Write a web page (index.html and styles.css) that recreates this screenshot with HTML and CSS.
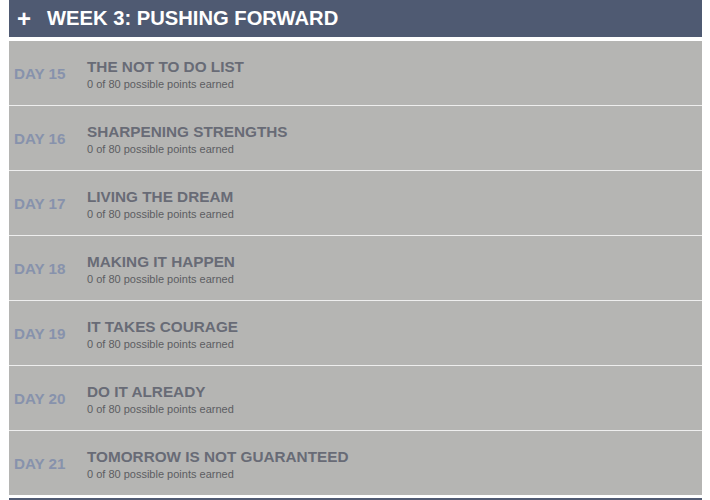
FILE: index.html
```html
<!DOCTYPE html>
<html>
<head>
<meta charset="utf-8">
<link rel="stylesheet" href="styles.css">
</head>
<body>
<div class="week">
  <div class="week-head"><span class="plus">+</span><span class="week-title">WEEK 3: PUSHING FORWARD</span></div>
  <ul class="days">
    <li class="day"><span class="day-num">DAY 15</span><div class="day-info"><div class="day-title">THE NOT TO DO LIST</div><div class="day-sub">0 of 80 possible points earned</div></div></li>
    <li class="day"><span class="day-num">DAY 16</span><div class="day-info"><div class="day-title">SHARPENING STRENGTHS</div><div class="day-sub">0 of 80 possible points earned</div></div></li>
    <li class="day"><span class="day-num">DAY 17</span><div class="day-info"><div class="day-title">LIVING THE DREAM</div><div class="day-sub">0 of 80 possible points earned</div></div></li>
    <li class="day"><span class="day-num">DAY 18</span><div class="day-info"><div class="day-title">MAKING IT HAPPEN</div><div class="day-sub">0 of 80 possible points earned</div></div></li>
    <li class="day"><span class="day-num">DAY 19</span><div class="day-info"><div class="day-title">IT TAKES COURAGE</div><div class="day-sub">0 of 80 possible points earned</div></div></li>
    <li class="day"><span class="day-num">DAY 20</span><div class="day-info"><div class="day-title">DO IT ALREADY</div><div class="day-sub">0 of 80 possible points earned</div></div></li>
    <li class="day"><span class="day-num">DAY 21</span><div class="day-info"><div class="day-title">TOMORROW IS NOT GUARANTEED</div><div class="day-sub">0 of 80 possible points earned</div></div></li>
  </ul>
  <div class="next-bar"></div>
</div>
</body>
</html>
```
FILE: styles.css
```css
html, body {
  margin: 0;
  padding: 0;
  background: #ffffff;
  font-family: "Liberation Sans", Arial, sans-serif;
}
.week {
  margin-left: 9px;
  width: 693px;
}
.week-head {
  height: 37px;
  background: #4f5a72;
  color: #ffffff;
  display: flex;
  align-items: center;
  padding-left: 8px;
  font-weight: bold;
  font-size: 20.2px;
}
.plus {
  width: 30px;
  font-size: 24px;
  line-height: 1;
}
.days {
  list-style: none;
  margin: 4px 0 0 0;
  padding: 0;
}
.day {
  height: 64px;
  background: #b5b5b3;
  border-bottom: 1px solid #eeeeee;
  display: flex;
  align-items: center;
}
.day:last-child {
  border-bottom: none;
}
.day-num {
  width: 78px;
  padding-left: 5px;
  box-sizing: border-box;
  font-weight: bold;
  font-size: 15.2px;
  color: #8792ac;
  margin-top: 1px;
}
.day-info {
  display: flex;
  flex-direction: column;
  margin-top: 3px;
}
.day-title {
  font-weight: bold;
  font-size: 15.3px;
  color: #686b76;
  line-height: 18px;
}
.day-sub {
  font-size: 11px;
  color: #5c5d62;
  line-height: 14px;
  margin-top: 1px;
}
.next-bar {
  margin-top: 3px;
  height: 10px;
  background: #4f5a72;
}
```
